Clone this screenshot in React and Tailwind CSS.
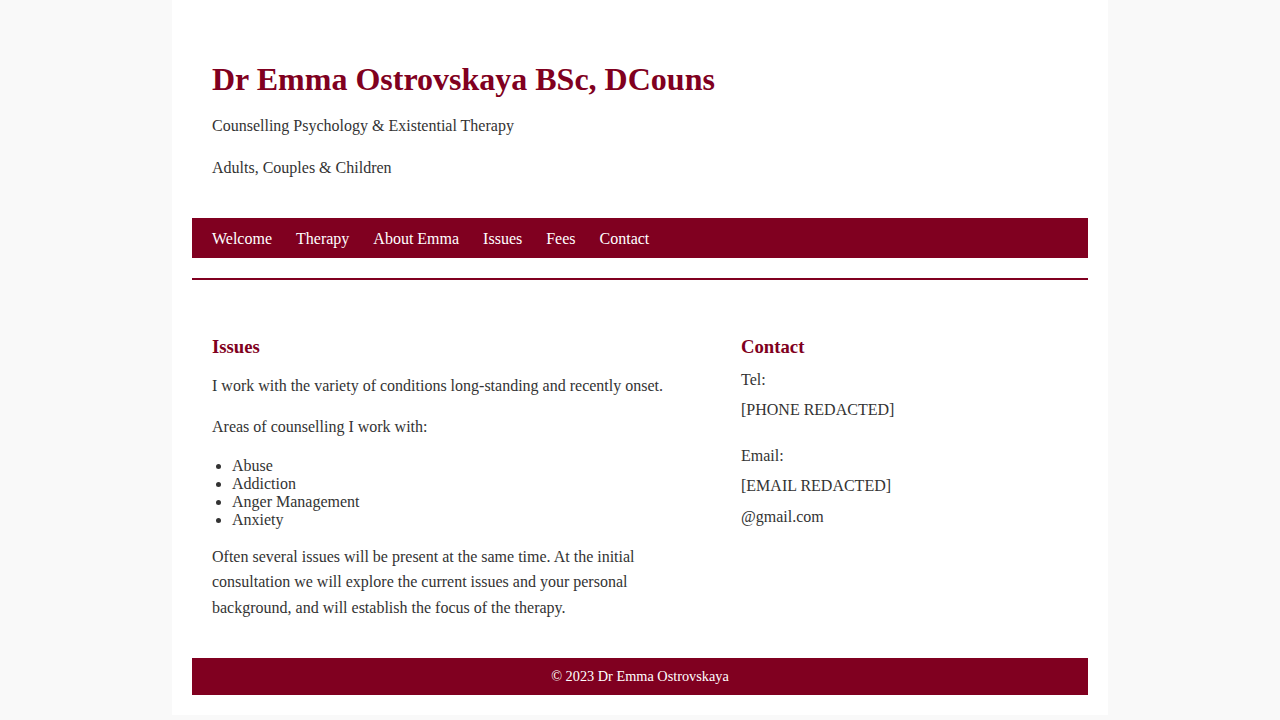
export default function App() {
  const burg = "bg-[#800020]";
  return (
    <div className="min-h-screen bg-[#f9f9f9] text-[#333333] text-[16px]" style={{ fontFamily: '"Liberation Serif", "Times New Roman", serif' }}>
      <div className="w-[936px] mx-auto bg-white p-5">
        <header className="px-5 pt-[42px]">
          <h1 className="text-[32px] leading-[35px] font-bold text-[#800020]">Dr Emma Ostrovskaya BSc, DCouns</h1>
          <p className="mt-4 leading-[25.6px]">Counselling Psychology &amp; Existential Therapy</p>
          <p className="mt-4 leading-[25.6px]">Adults, Couples &amp; Children</p>
        </header>
        <nav className={`mt-[38px] h-10 ${burg} flex items-center pl-5 pt-[2px] gap-6 text-white`}>
          <a href="#">Welcome</a>
          <a href="#">Therapy</a>
          <a href="#">About Emma</a>
          <a href="#">Issues</a>
          <a href="#">Fees</a>
          <a href="#">Contact</a>
        </nav>
        <div className={`mt-5 h-[2px] ${burg}`}></div>
        <main className="grid grid-cols-[500px_1fr] gap-[29px] pt-[56px]">
          <section className="px-5">
            <h3 className="text-[18.72px] leading-[22px] font-bold text-[#800020]">Issues</h3>
            <p className="mt-[14.5px] leading-[25.6px]">I work with the variety of conditions long-standing and recently onset.</p>
            <p className="mt-4 leading-[25.6px]">Areas of counselling I work with:</p>
            <ul className="mt-[17px] pl-5 list-disc leading-[18px]">
              <li>Abuse</li>
              <li>Addiction</li>
              <li>Anger Management</li>
              <li>Anxiety</li>
            </ul>
            <p className="mt-[15px] leading-[25.6px]">Often several issues will be present at the same time. At the initial consultation we will explore the current issues and your personal background, and will establish the focus of the therapy.</p>
          </section>
          <section className="px-5">
            <h3 className="text-[18.72px] leading-[22px] font-bold text-[#800020]">Contact</h3>
            <p className="mt-[8.5px] leading-[25.6px]">Tel:</p>
            <p className="mt-[4.4px] leading-[25.6px]">[PHONE REDACTED]</p>
            <p className="mt-[20.4px] leading-[25.6px]">Email:</p>
            <p className="mt-[4.4px] leading-[25.6px]">[EMAIL REDACTED]</p>
            <p className="mt-[5.4px] leading-[25.6px]">@gmail.com</p>
          </section>
        </main>
        <footer className={`mt-[37px] h-[37px] ${burg} flex items-center justify-center pt-[2px] text-white text-[14.3px]`}>
          © 2023 Dr Emma Ostrovskaya
        </footer>
      </div>
    </div>
  );
}
